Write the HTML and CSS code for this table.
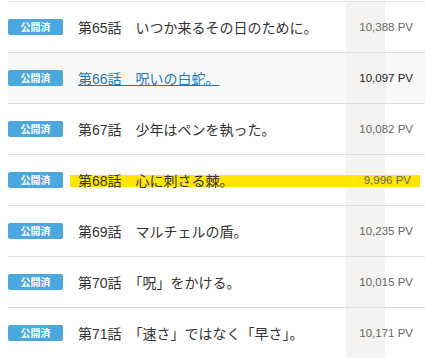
FILE: index.html
```html
<!DOCTYPE html>
<html lang="ja">
<head>
<meta charset="utf-8">
<link rel="stylesheet" href="styles.css">
</head>
<body>
<ul class="episodes">
  <li class="ep">
    <span class="badge">公開済</span>
    <div class="ep-body"><span class="ep-title">第65話　いつか来るその日のために。</span><span class="ep-pv">10,388 PV</span></div>
  </li>
  <li class="ep ep--hover">
    <span class="badge">公開済</span>
    <div class="ep-body"><a class="ep-title ep-link" href="#">第66話　呪いの白蛇。</a><span class="ep-pv">10,097 PV</span></div>
  </li>
  <li class="ep">
    <span class="badge">公開済</span>
    <div class="ep-body"><span class="ep-title">第67話　少年はペンを執った。</span><span class="ep-pv">10,082 PV</span></div>
  </li>
  <li class="ep">
    <span class="badge">公開済</span>
    <div class="ep-body ep-body--mark"><span class="ep-title">第68話　心に刺さる棘。</span><span class="ep-pv">9,996 PV</span></div>
  </li>
  <li class="ep">
    <span class="badge">公開済</span>
    <div class="ep-body"><span class="ep-title">第69話　マルチェルの盾。</span><span class="ep-pv">10,235 PV</span></div>
  </li>
  <li class="ep">
    <span class="badge">公開済</span>
    <div class="ep-body"><span class="ep-title">第70話　「呪」をかける。</span><span class="ep-pv">10,015 PV</span></div>
  </li>
  <li class="ep">
    <span class="badge">公開済</span>
    <div class="ep-body"><span class="ep-title">第71話　「速さ」ではなく「早さ」。</span><span class="ep-pv">10,171 PV</span></div>
  </li>
</ul>
</body>
</html>
```

FILE: styles.css
```css
html, body {
  margin: 0;
  padding: 0;
  background: #ffffff;
}
body {
  padding-top: 1px;
  font-family: "Liberation Sans", "Noto Sans CJK JP", sans-serif;
  color: #333333;
  overflow: hidden;
}
.episodes {
  list-style: none;
  margin: 0 0 0 8px;
  padding: 0;
}
.ep {
  display: flex;
  align-items: stretch;
  height: 50px;
  border-top: 1px solid #dddddd;
  background-color: #ffffff;
  background-image: linear-gradient(to right, transparent 338px, #f4f3f1 338px, #f4f3f1 377px, transparent 377px);
}
.ep--hover {
  background-color: #f8f8f7;
}
.badge {
  align-self: center;
  flex: none;
  width: 55px;
  height: 16px;
  line-height: 16px;
  border-radius: 2px;
  background: #4ba8de;
  color: #ffffff;
  font-size: 10px;
  font-weight: bold;
  text-align: center;
  font-family: "Noto Sans CJK JP", sans-serif;
}
.ep-body {
  flex: 1;
  display: flex;
  align-items: center;
  justify-content: space-between;
  margin-left: 7px;
  margin-right: 5px;
  padding: 0 7px 0 8px;
}
.ep-body--mark {
  padding-right: 9px;
  background-image: linear-gradient(#ffe500, #ffe500);
  background-repeat: no-repeat;
  background-size: 100% 12px;
  background-position: 0 20px;
}
.ep-title {
  font-size: 14px;
  color: #333333;
  white-space: nowrap;
}
.ep-link {
  color: #1b78c2;
  text-decoration: underline;
}
.ep-pv {
  font-size: 11.5px;
  color: #666666;
  white-space: nowrap;
}
.ep--hover .ep-pv {
  color: #222222;
}
```
